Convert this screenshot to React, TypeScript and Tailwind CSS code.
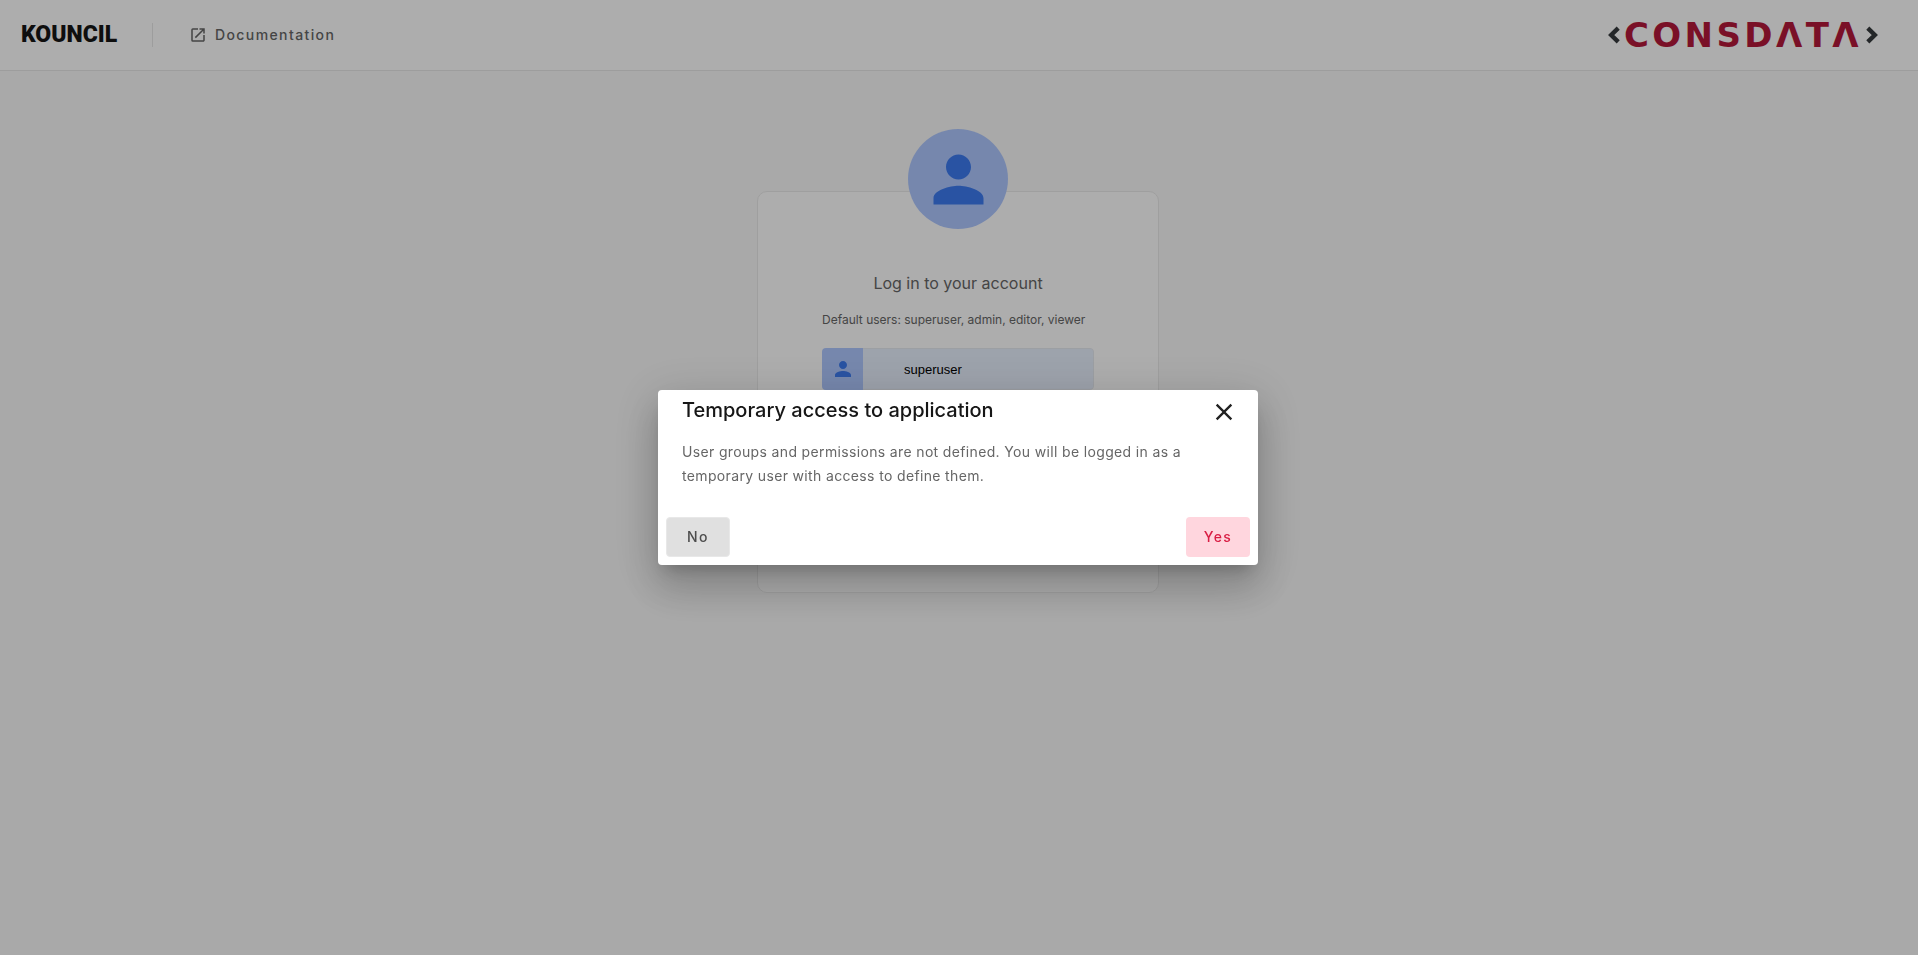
import React from "react";
import { MdClose, MdOpenInNew, MdPerson } from "react-icons/md";

function Chevron({ flipped = false }: { flipped?: boolean }) {
  return (
    <svg viewBox="0 0 12 18" className="h-[18px] w-3 shrink-0" fill="none" stroke="#363a3d" strokeWidth="4.4" aria-hidden="true">
      <path d={flipped ? "M1.8 2.2 8.8 9 1.8 15.8" : "M10.2 2.2 3.2 9 10.2 15.8"} />
    </svg>
  );
}

function Header() {
  return (
    <header className="flex h-[71px] items-center justify-between border-b border-[#e8e8e8] bg-white pr-10 pl-5">
      <div className="flex items-center">
        <a href="#" className="w-[100px] pl-px font-[Roboto,sans-serif] text-[23px] leading-6 font-black text-[#161616]">
          KOUNCIL
        </a>
        <div className="ml-8 h-6 w-px bg-[#e8e8e8]" />
        <a href="#docs" className="ml-9 flex items-center gap-2 text-sm font-medium tracking-widest text-[#666666]">
          <MdOpenInNew className="size-[18px]" aria-hidden="true" />
          Documentation
        </a>
      </div>
      <a
        href="#consdata"
        aria-label="Consdata"
        className="flex items-center gap-1 font-['DejaVu_Sans',sans-serif] text-[34px] leading-9 font-bold tracking-widest text-[#b4183a]"
      >
        <Chevron />
        CONSDΛTΛ
        <Chevron flipped />
      </a>
    </header>
  );
}

function LoginCard() {
  return (
    <section className="relative flex min-h-[402px] w-[402px] flex-col items-center rounded-[10px] border border-[#ebebeb] bg-white px-16 pt-20">
      <div className="absolute -top-[63px] flex size-[100px] items-center justify-center rounded-full bg-[#afc8ff]">
        <MdPerson className="size-[75px] text-[#3d7bf0]" aria-hidden="true" />
      </div>
      <h1 className="text-base leading-[22px] text-[#666666]">Log in to your account</h1>
      <form className="mt-4 w-full">
        <p className="text-xs leading-5 text-[#666666]">Default users: superuser, admin, editor, viewer</p>
        <div className="mt-[18px] flex h-[42px] overflow-hidden rounded">
          <label htmlFor="username" aria-label="Username" className="flex w-[41px] items-center justify-center bg-[#afc8ff]">
            <MdPerson className="size-6 text-[#3d7bf0]" aria-hidden="true" />
          </label>
          <input
            id="username"
            type="text"
            defaultValue="superuser"
            className="min-w-0 flex-1 rounded-r border border-l-0 border-[#e6eaf0] bg-[#e8f0fe] pt-0.5 pl-[41px] font-['Liberation_Sans',Arial,sans-serif] text-[13px] text-black"
          />
        </div>
      </form>
    </section>
  );
}

function AccessDialog() {
  return (
    <div className="fixed inset-0 flex items-center justify-center bg-black/32 pr-0.5">
      <div
        role="dialog"
        aria-modal="true"
        aria-labelledby="dialog-title"
        className="w-[600px] rounded bg-white shadow-[0_11px_15px_-7px_rgba(0,0,0,0.2),0_24px_38px_3px_rgba(0,0,0,0.14),0_9px_46px_8px_rgba(0,0,0,0.12)]"
      >
        <div className="flex h-11 items-center justify-between pr-5 pl-6">
          <h2 id="dialog-title" className="pb-1 text-xl leading-8 font-medium text-[#161616]">
            Temporary access to application
          </h2>
          <button type="button" aria-label="Close" className="text-[#212121]">
            <MdClose className="size-7" />
          </button>
        </div>
        <p className="px-6 pt-1.5 text-sm leading-6 tracking-wide text-[#666666]">
          User groups and permissions are not defined. You will be logged in as a temporary user with access to define them.
        </p>
        <div className="flex justify-between px-2 pt-[29px] pb-2">
          <button
            type="button"
            className="h-10 w-16 rounded border border-[#e8e8e8] bg-[#e0e0e0] text-sm font-medium tracking-widest text-[#4d4d4d]"
          >
            No
          </button>
          <button type="button" className="h-10 w-16 rounded bg-[#ffd6de] text-sm font-medium tracking-widest text-[#d91e44]">
            Yes
          </button>
        </div>
      </div>
    </div>
  );
}

export default function App() {
  return (
    <div className="min-h-screen bg-[#f9f9f9] font-['Inter',sans-serif]">
      <Header />
      <main className="flex justify-center pt-[120px] pr-0.5">
        <LoginCard />
      </main>
      <AccessDialog />
    </div>
  );
}
